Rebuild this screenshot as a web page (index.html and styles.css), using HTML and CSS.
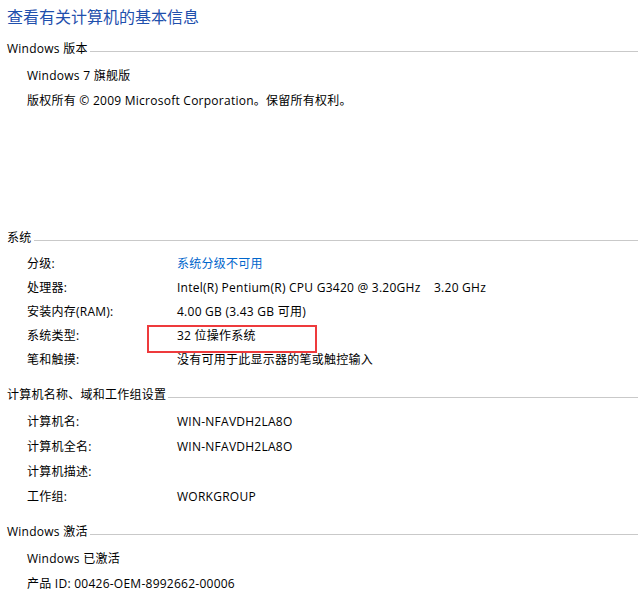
FILE: index.html
```html
<!DOCTYPE html>
<html lang="zh-CN">
<head>
  <meta charset="UTF-8" />
  <title>查看有关计算机的基本信息</title>
  <link rel="stylesheet" href="styles.css">
</head>
<body>
  <h1 class="page-title">查看有关计算机的基本信息</h1>

  <!-- Windows 版本 -->
  <section class="group group-edition">
    <h2 class="group-head"><span>Windows 版本</span><i class="rule"></i></h2>
    <div class="rows rows-25">
      <div class="row"><span class="full">Windows 7 旗舰版</span></div>
      <div class="row"><span class="full">版权所有 © 2009 Microsoft Corporation。保留所有权利。</span></div>
    </div>
  </section>

  <!-- 系统 -->
  <section class="group">
    <h2 class="group-head"><span>系统</span><i class="rule"></i></h2>
    <div class="rows rows-24">
      <div class="row"><span class="label">分级:</span><a class="value link" href="#">系统分级不可用</a></div>
      <div class="row"><span class="label">处理器:</span><span class="value">Intel(R) Pentium(R) CPU G3420 @ 3.20GHz&nbsp;&nbsp;&nbsp; 3.20 GHz</span></div>
      <div class="row"><span class="label">安装内存(RAM):</span><span class="value">4.00 GB (3.43 GB 可用)</span></div>
      <div class="row"><span class="label">系统类型:</span><span class="value marked">32 位操作系统</span></div>
      <div class="row"><span class="label">笔和触摸:</span><span class="value">没有可用于此显示器的笔或触控输入</span></div>
    </div>
  </section>

  <!-- 计算机名称 -->
  <section class="group">
    <h2 class="group-head"><span>计算机名称、域和工作组设置</span><i class="rule"></i></h2>
    <div class="rows rows-25">
      <div class="row"><span class="label">计算机名:</span><span class="value">WIN-NFAVDH2LA8O</span></div>
      <div class="row"><span class="label">计算机全名:</span><span class="value">WIN-NFAVDH2LA8O</span></div>
      <div class="row"><span class="label">计算机描述:</span><span class="value"></span></div>
      <div class="row"><span class="label">工作组:</span><span class="value">WORKGROUP</span></div>
    </div>
  </section>

  <!-- Windows 激活 -->
  <section class="group">
    <h2 class="group-head"><span>Windows 激活</span><i class="rule"></i></h2>
    <div class="rows rows-25">
      <div class="row"><span class="full">Windows 已激活</span></div>
      <div class="row"><span class="full">产品 ID: 00426-OEM-8992662-00006</span></div>
    </div>
  </section>
</body>
</html>
```

FILE: styles.css
```css
/* Reset */
* {
  margin: 0;
  padding: 0;
  box-sizing: border-box;
}

body {
  width: 639px;
  font-family: "Open Sans", "Noto Sans CJK SC", sans-serif;
  font-size: 12px;
  letter-spacing: 0.25px;
  color: #000;
  background-color: #fff;
  padding-top: 5px;
}

.page-title {
  font-size: 16px;
  font-weight: normal;
  line-height: 24px;
  letter-spacing: 0;
  color: #1f50ad;
  padding-left: 7px;
  margin-bottom: 8px;
}

/* Group headings with trailing rule */
.group-head {
  display: flex;
  align-items: center;
  font-size: 12px;
  font-weight: normal;
  line-height: 24px;
  padding-left: 7px;
}

.group-head .rule {
  flex: 1;
  height: 0;
  border-top: 1px solid #c9c9c9;
  margin: 4px 1px 0 2px;
}

.group {
  margin-bottom: 11px;
}

.group-edition {
  min-height: 189px;
  margin-bottom: 0;
}

/* Rows */
.rows {
  padding-top: 2px;
}

.rows-24 .row {
  height: 24px;
  line-height: 24px;
}

.rows-25 .row {
  height: 25px;
  line-height: 25px;
}

.row {
  display: flex;
  padding-left: 27px;
  white-space: nowrap;
}

.label {
  width: 150px;
}

.value {
  position: relative;
}

.link {
  color: #0066cc;
  text-decoration: none;
}

/* Red annotation box over the system type */
.marked::after {
  content: "";
  position: absolute;
  left: -30px;
  top: 1px;
  width: 166px;
  height: 24px;
  border: 2px solid #ee3a3c;
}
```
